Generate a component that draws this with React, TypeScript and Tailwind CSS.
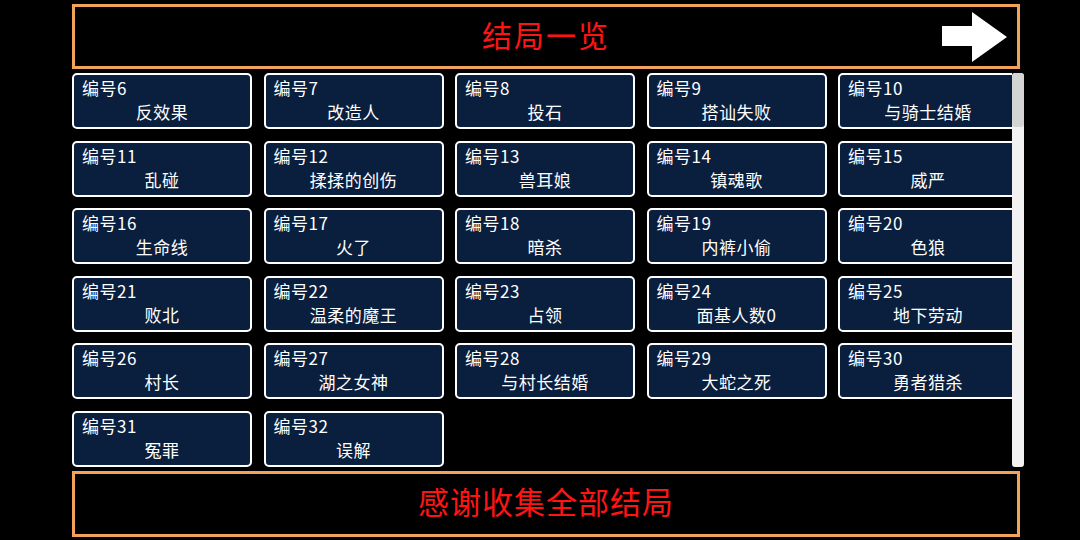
import React from "react";

const endings: { id: number; name: string }[] = [
  { id: 6, name: "反效果" },
  { id: 7, name: "改造人" },
  { id: 8, name: "投石" },
  { id: 9, name: "搭讪失败" },
  { id: 10, name: "与骑士结婚" },
  { id: 11, name: "乱碰" },
  { id: 12, name: "揉揉的创伤" },
  { id: 13, name: "兽耳娘" },
  { id: 14, name: "镇魂歌" },
  { id: 15, name: "威严" },
  { id: 16, name: "生命线" },
  { id: 17, name: "火了" },
  { id: 18, name: "暗杀" },
  { id: 19, name: "内裤小偷" },
  { id: 20, name: "色狼" },
  { id: 21, name: "败北" },
  { id: 22, name: "温柔的魔王" },
  { id: 23, name: "占领" },
  { id: 24, name: "面基人数0" },
  { id: 25, name: "地下劳动" },
  { id: 26, name: "村长" },
  { id: 27, name: "湖之女神" },
  { id: 28, name: "与村长结婚" },
  { id: 29, name: "大蛇之死" },
  { id: 30, name: "勇者猎杀" },
  { id: 31, name: "冤罪" },
  { id: 32, name: "误解" },
];

const font = "font-['Noto_Sans_CJK_SC','Noto_Sans',sans-serif]";

const NextArrow = () => (
  <svg width="65" height="50" viewBox="0 0 65 50" className="block">
    <polygon points="0,14 30,14 30,0 65,25 30,50 30,34 0,34" fill="#ffffff" />
  </svg>
);

const EndingCard = ({ id, name }: { id: number; name: string }) => (
  <div className="h-[56px] w-[180px] rounded-[5px] border-2 border-white bg-[#0a1e3e] pt-[1px] text-[17px] leading-[24px] text-white">
    <div className="pl-[8px] tracking-[0.5px]">编号{id}</div>
    <div className="text-center tracking-[0.5px]">{name}</div>
  </div>
);

export default function App() {
  return (
    <div className={`h-[540px] w-[1080px] overflow-hidden bg-black pl-[72px] pt-[4px] ${font}`}>
      {/* title bar */}
      <div className="grid h-[65px] w-[948px] grid-cols-[1fr_auto_1fr] items-center border-[3px] border-[#f3a25c]">
        <div />
        <div className="pb-[5px] text-[30px] leading-none tracking-[2px] text-[#ff1414]">结局一览</div>
        <div className="mr-[10px] justify-self-end">
          <NextArrow />
        </div>
      </div>

      {/* ending list */}
      <div className="mt-[4px] flex h-[394px] w-[952px]">
        <div className="w-[940px] overflow-hidden">
          <div className="grid w-[946px] grid-cols-[repeat(5,180px)] gap-x-[11.5px] gap-y-[11.5px]">
            {endings.map((e) => (
              <EndingCard key={e.id} id={e.id} name={e.name} />
            ))}
          </div>
        </div>
        <div className="flex h-full w-[12px] flex-col overflow-hidden rounded-[3px] bg-[#f2f2f2]">
          <div className="h-[54px] rounded-[3px] bg-[#d4d4d4]" />
        </div>
      </div>

      {/* footer */}
      <div className="mt-[4px] flex h-[66px] w-[948px] items-center justify-center border-[3px] border-[#f3a25c]">
        <div className="pb-[7px] text-[31px] leading-none tracking-[1px] text-[#ff1414]">感谢收集全部结局</div>
      </div>
    </div>
  );
}
